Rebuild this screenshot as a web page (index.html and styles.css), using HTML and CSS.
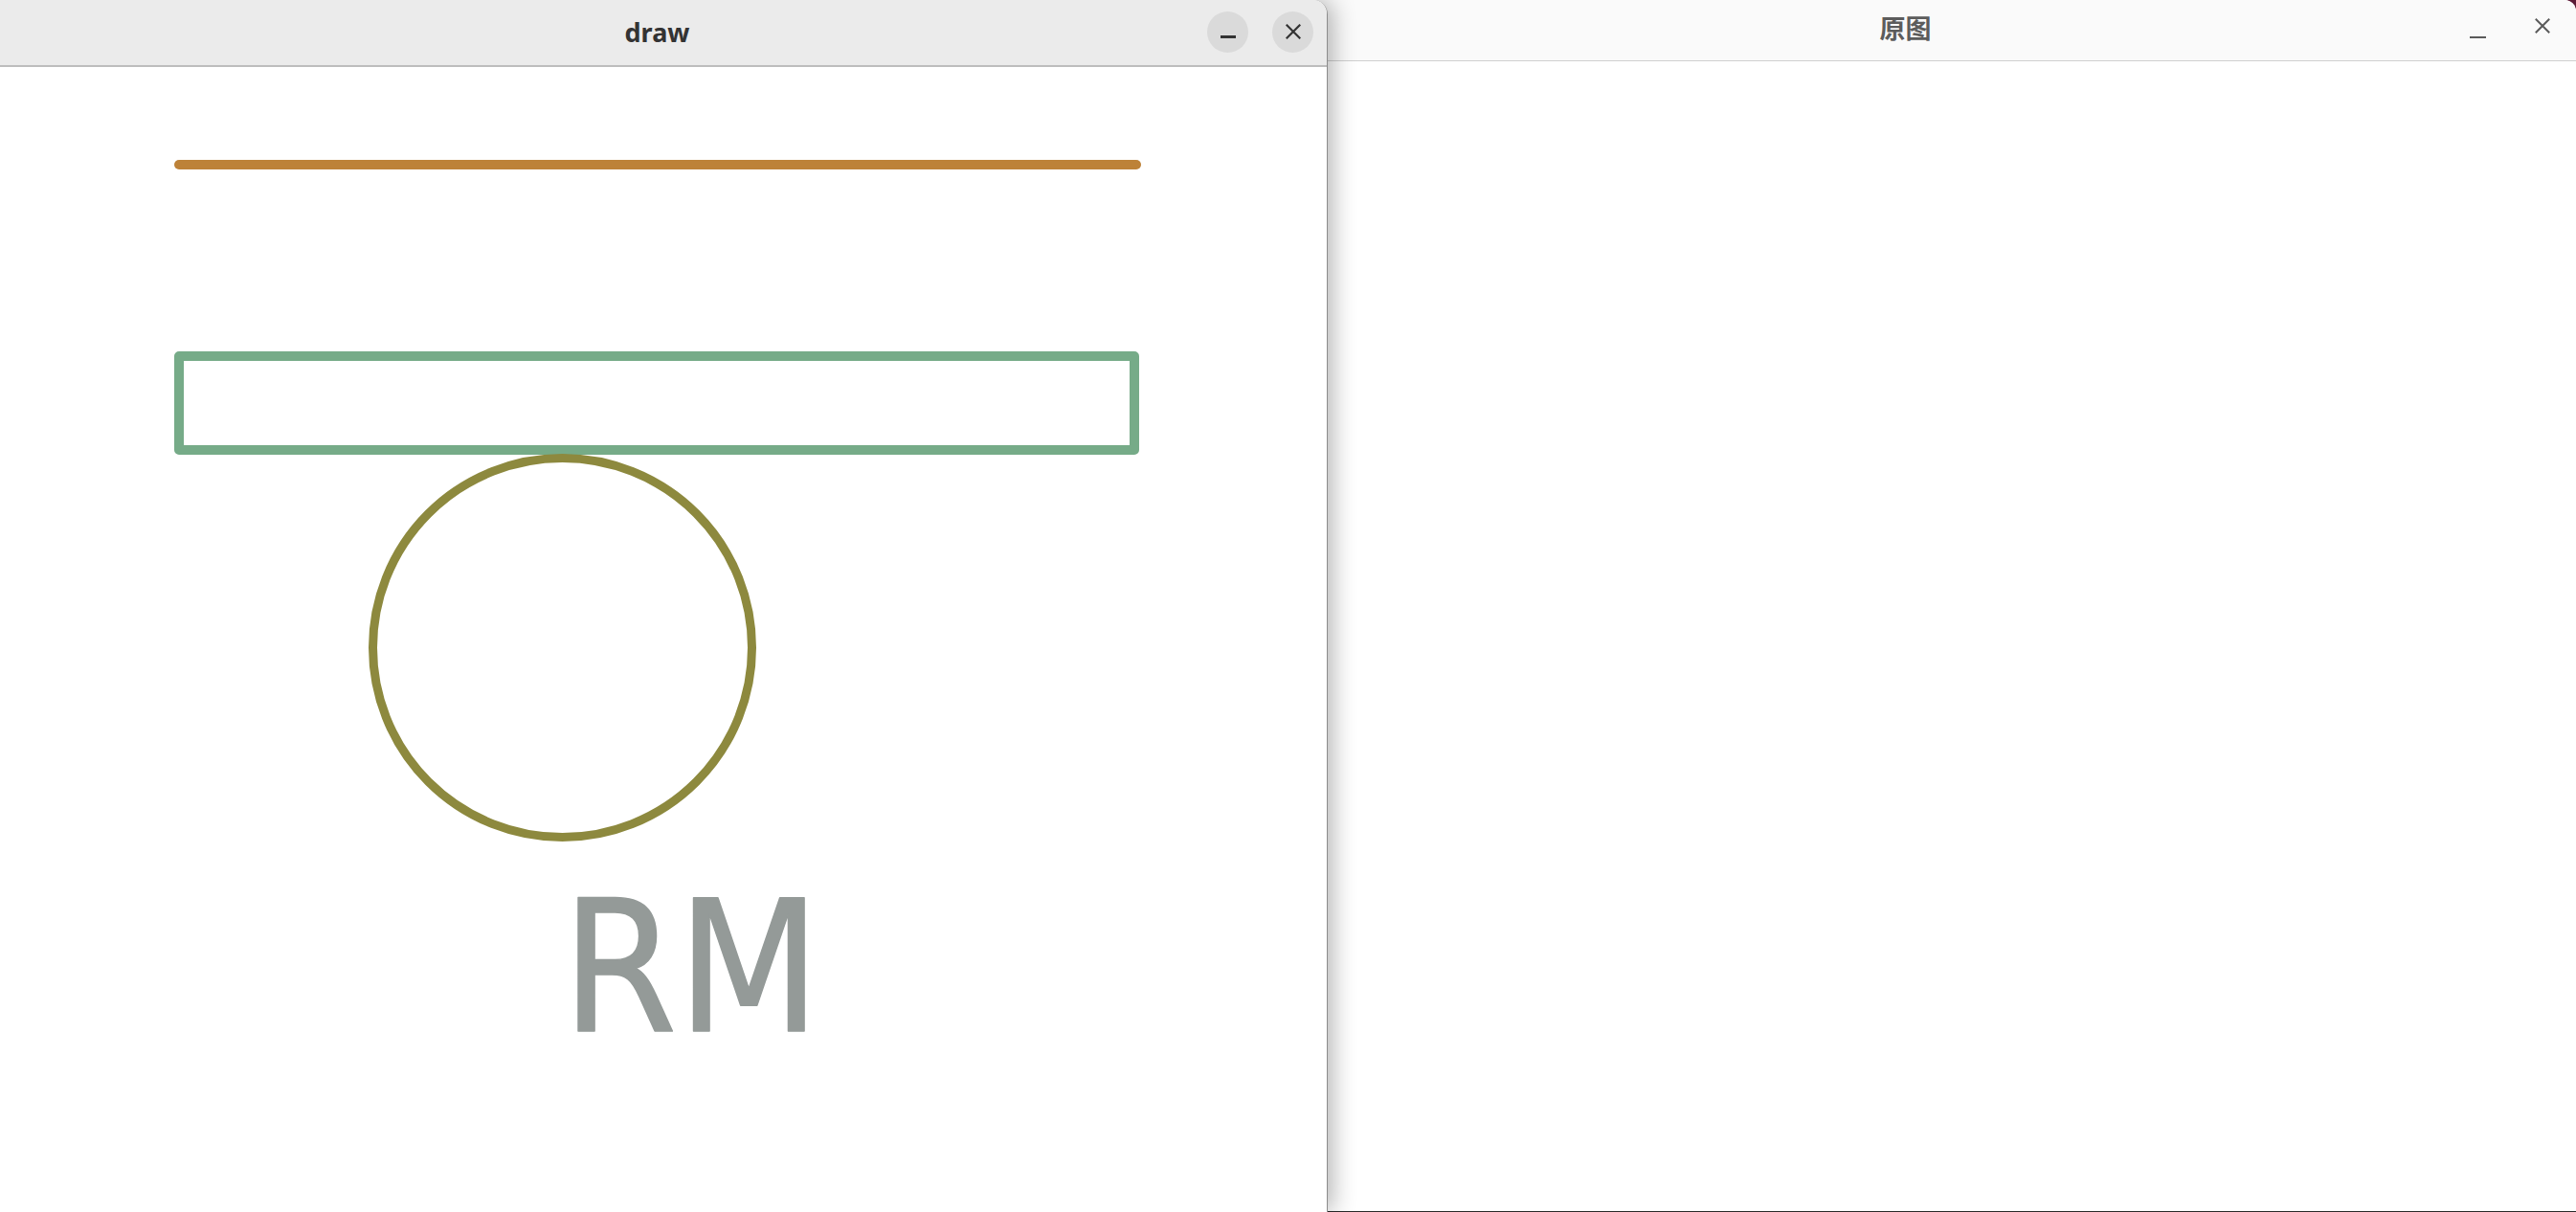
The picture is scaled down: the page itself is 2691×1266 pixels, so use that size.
FILE: index.html
```html
<!DOCTYPE html>
<html lang="zh">
<head>
<meta charset="utf-8">
<title>draw</title>
<link rel="stylesheet" href="styles.css">
</head>
<body>
<div class="desktop">
  <section class="win win-draw">
    <header class="titlebar titlebar-active">
      <div class="title">draw</div>
      <div class="controls">
        <button class="ctl ctl-round" aria-label="minimize"><span class="min-glyph"></span></button>
        <button class="ctl ctl-round" aria-label="close">
          <svg class="x-glyph" width="16" height="16" viewBox="0 0 16 16"><path d="M1.5 1.5 L14.5 14.5 M14.5 1.5 L1.5 14.5" stroke="#333" stroke-width="2.2" stroke-linecap="square" fill="none"/></svg>
        </button>
      </div>
    </header>
    <div class="canvas">
      <svg class="drawing" width="1386" height="1196" viewBox="0 70 1386 1196">
        <line x1="187" y1="172" x2="1187" y2="172" stroke="#bd8238" stroke-width="10" stroke-linecap="round"/>
        <rect x="187" y="372" width="998" height="98" fill="none" stroke="#76ab88" stroke-width="10" stroke-linejoin="round"/>
        <circle cx="587.5" cy="676.5" r="198" fill="none" stroke="#8d893e" stroke-width="9"/>
        <text x="587" y="1077" class="rm" textLength="270" lengthAdjust="spacingAndGlyphs">RM</text>
      </svg>
    </div>
  </section>
  <section class="win win-orig">
    <header class="titlebar titlebar-inactive">
      <div class="title title-cjk">原图</div>
      <div class="controls controls-flat">
        <button class="ctl ctl-flat" aria-label="minimize"><span class="min-glyph min-flat"></span></button>
        <button class="ctl ctl-flat" aria-label="close">
          <svg class="x-glyph" width="16" height="16" viewBox="0 0 16 16"><path d="M1.5 1.5 L14.5 14.5 M14.5 1.5 L1.5 14.5" stroke="#5a5a5a" stroke-width="2" stroke-linecap="square" fill="none"/></svg>
        </button>
      </div>
    </header>
    <div class="orig-body"></div>
  </section>
</div>
</body>
</html>
```
FILE: styles.css
```css
* { box-sizing: border-box; }
html, body {
  margin: 0;
  padding: 0;
}
body {
  width: 2691px;
  height: 1266px;
  overflow: hidden;
  background: #5c1a36;
  font-family: "Noto Sans", "DejaVu Sans", sans-serif;
}
.desktop {
  display: flex;
  width: 2691px;
  height: 1266px;
}
.win {
  display: flex;
  flex-direction: column;
  background: #ffffff;
}
.win-draw {
  position: relative;
  z-index: 2;
  width: 1387px;
  flex: none;
  height: 1266px;
  border-right: 1px solid #8c8c8c;
  border-top-right-radius: 15px;
  box-shadow: 4px 0 26px rgba(0, 0, 0, 0.32);
}
.titlebar {
  display: flex;
  align-items: center;
  flex: none;
}
.titlebar-active {
  height: 70px;
  background: #ebebeb;
  border-bottom: 2px solid #bdbdbd;
  border-top-right-radius: 14px;
  padding-bottom: 2px;
}
.title {
  flex: 1;
  text-align: center;
  font-weight: 700;
  font-size: 27px;
  color: #333333;
  padding-left: 112px;
  line-height: 1;
}
.controls {
  display: flex;
  align-items: center;
  gap: 25px;
  margin-right: 14px;
}
.ctl {
  border: 0;
  padding: 0;
  margin: 0;
  display: flex;
  align-items: center;
  justify-content: center;
  background: transparent;
}
.ctl-round {
  width: 43px;
  height: 43px;
  border-radius: 50%;
  background: #dadada;
}
.min-glyph {
  display: block;
  width: 16px;
  height: 3px;
  background: #333333;
  margin-top: 10px;
}
.x-glyph { display: block; }
.canvas {
  flex: 1;
  background: #ffffff;
}
.drawing { display: block; }
.rm {
  font-family: "DejaVu Sans", sans-serif;
  font-size: 190px;
  fill: #949a98;
  stroke: #949a98;
  stroke-width: 1.5px;
  stroke-linejoin: round;
}
.win-orig {
  flex: 1;
  margin-left: -40px;
  height: 1266px;
  border-top-right-radius: 12px;
  overflow: hidden;
  border-bottom: 1px solid #2a2a2a;
}
.titlebar-inactive {
  height: 64px;
  background: #fafafa;
  border-bottom: 1px solid #d0d0d0;
}
.title-cjk {
  font-family: "Noto Sans CJK SC", "Noto Sans", sans-serif;
  font-weight: 700;
  font-size: 27px;
  color: #5c5c5c;
  padding-left: 63px;
  padding-bottom: 6px;
}
.controls-flat {
  gap: 34px;
  margin-right: 18px;
}
.ctl-flat {
  width: 34px;
  height: 34px;
}
.ctl-flat:first-child .min-glyph { margin-top: 14px; }
.ctl-flat:last-child { margin-bottom: 10px; }
.min-flat {
  width: 17px;
  height: 2px;
  background: #5a5a5a;
}
.orig-body {
  flex: 1;
  background: #ffffff;
}
```
